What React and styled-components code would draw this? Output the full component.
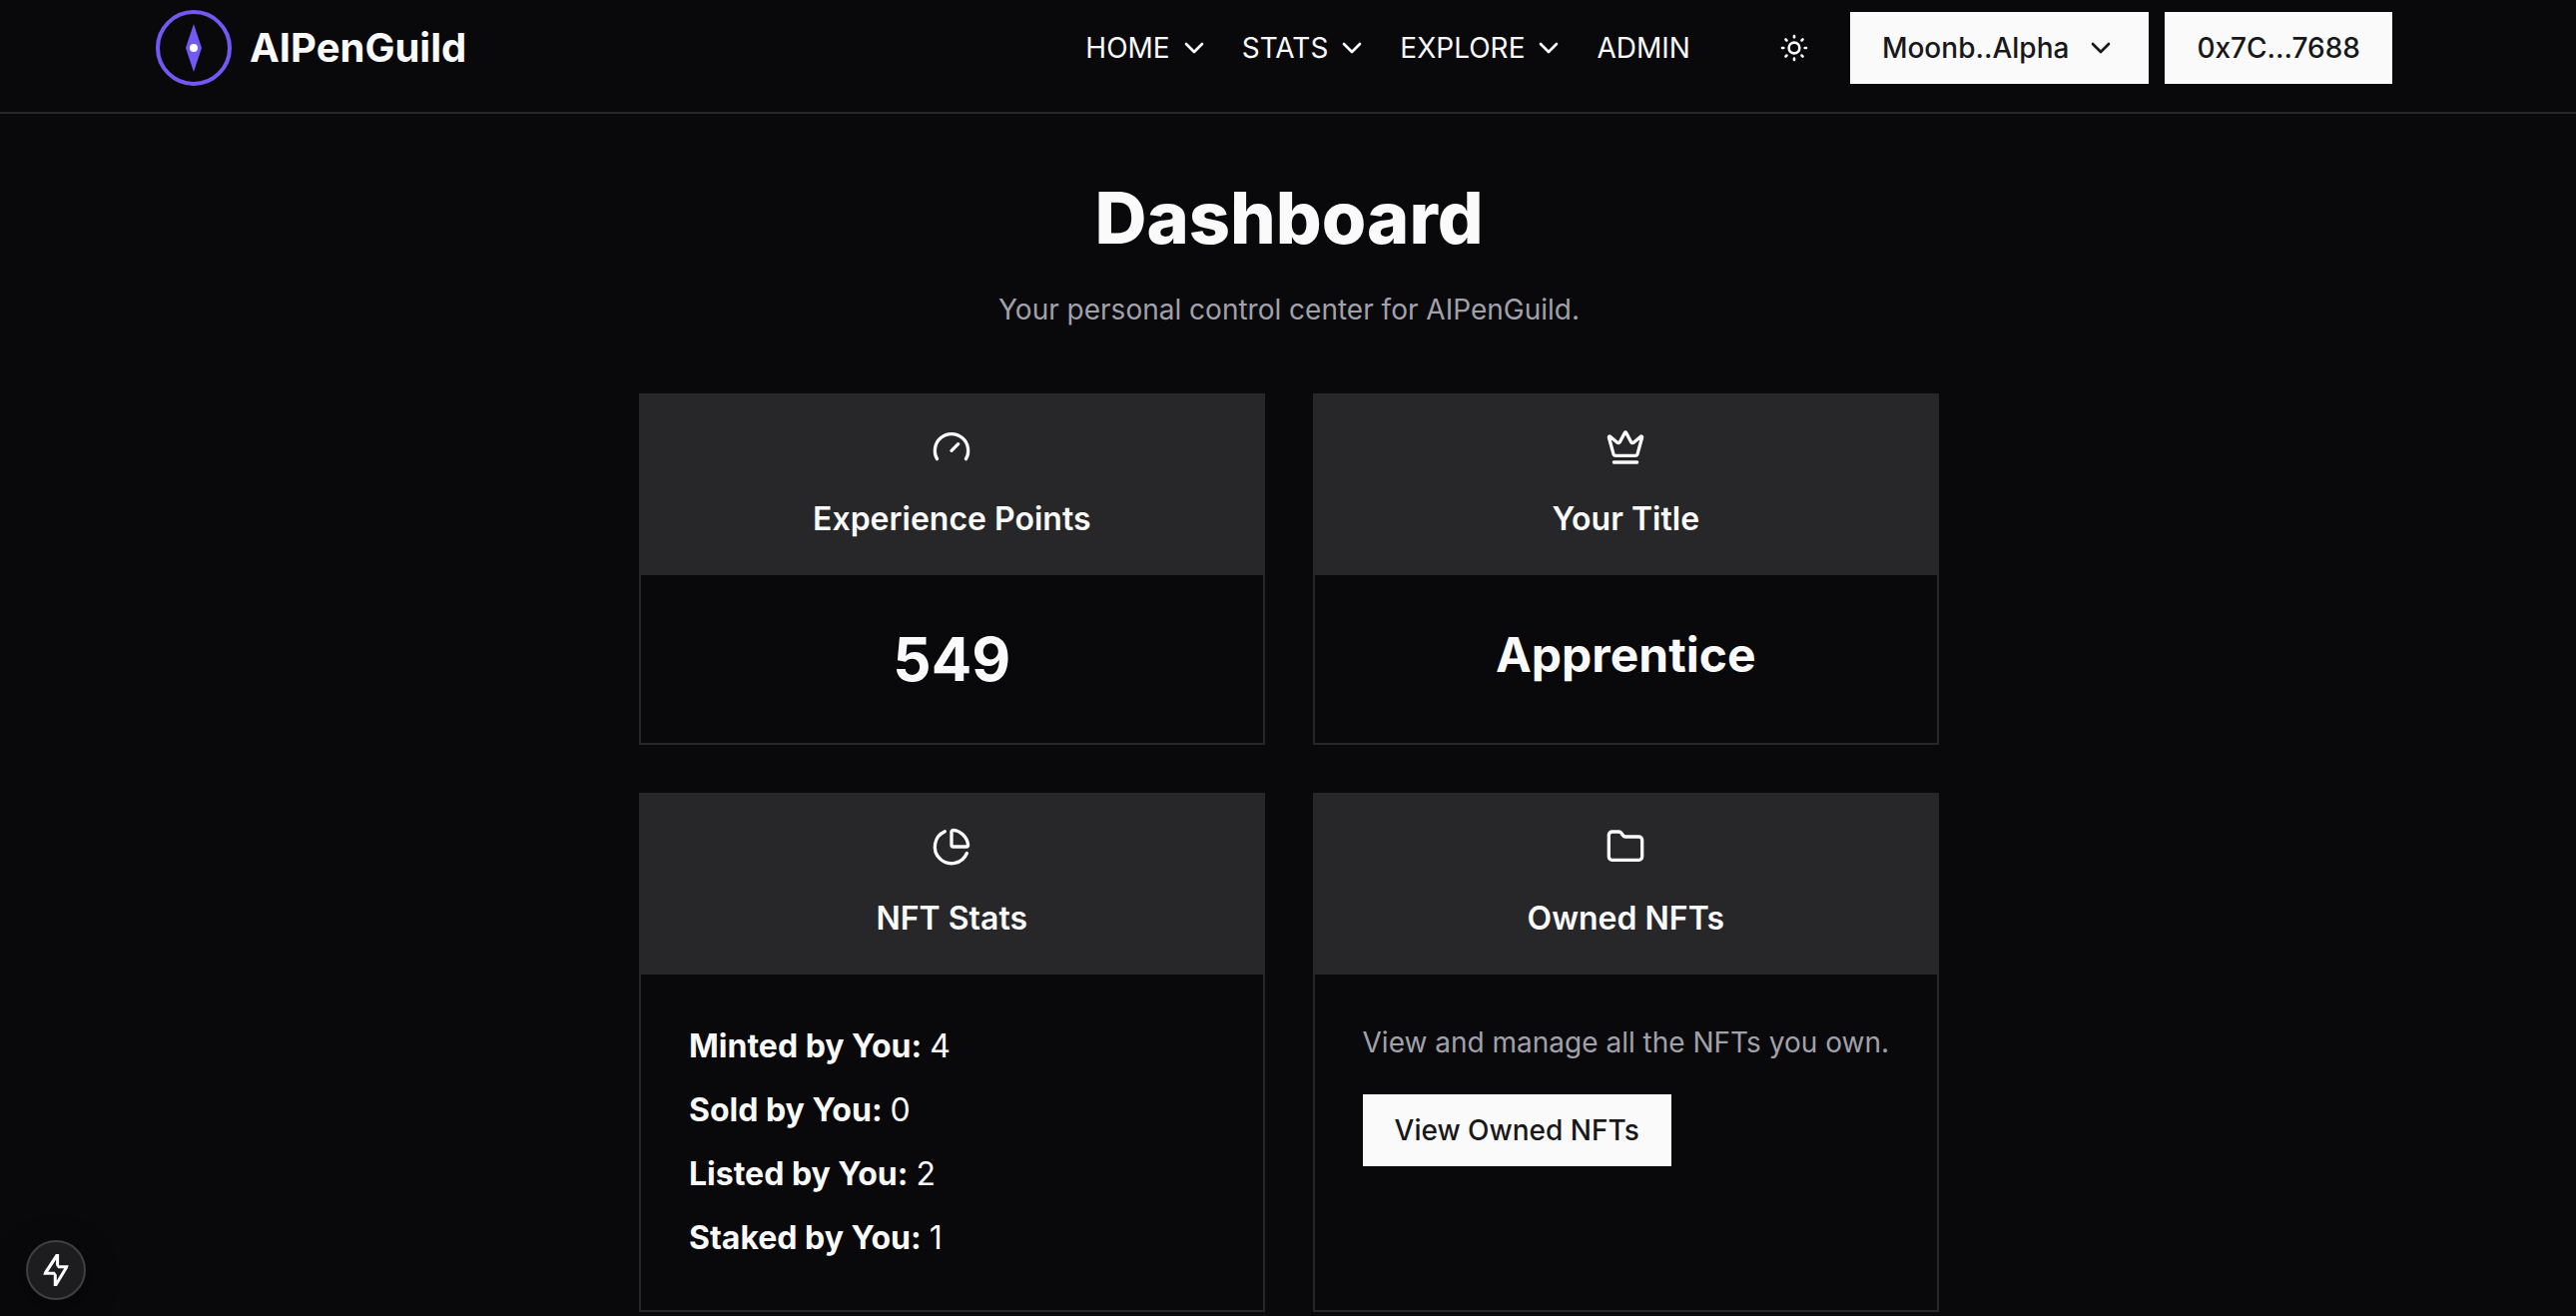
import React from "react";
import styled, { createGlobalStyle } from "styled-components";
import { ChevronDown, Crown, Folder, Gauge, ChartPie, SunMedium } from "lucide-react";

const color = {
  bg: "#09090b",
  fg: "#fafafa",
  muted: "#a1a1aa",
  surface: "#27272a",
  ink: "#18181b",
  accent: "#7458f5",
};

const GlobalStyle = createGlobalStyle`
  *, *::before, *::after { box-sizing: border-box; }
  body {
    margin: 0;
    background: ${color.bg};
    color: ${color.fg};
    font-family: Inter, "Liberation Sans", sans-serif;
    font-size: 28px;
    line-height: 40px;
    -webkit-font-smoothing: antialiased;
  }
  h1, h2, p, dl, dd { margin: 0; padding: 0; }
  button { font: inherit; color: inherit; border: 0; cursor: pointer; }
  svg { display: block; flex: none; }
`;

const Page = styled.div`
  min-height: 100vh;
`;

const Header = styled.header`
  border-bottom: 2px solid ${color.surface};
  padding: 0 184px 16px 154px;
`;

const HeaderInner = styled.div`
  height: 96px;
  display: flex;
  align-items: center;
  justify-content: space-between;
`;

const Brand = styled.a`
  display: flex;
  align-items: center;
  gap: 16px;
  color: inherit;
  text-decoration: none;
  font-size: 40px;
  font-weight: 700;
`;

const HeaderEnd = styled.div`
  display: flex;
  align-items: center;
  gap: 64px;
`;

const Nav = styled.nav`
  display: flex;
  align-items: center;
  gap: 32px;
`;

const NavButton = styled.button`
  display: flex;
  align-items: center;
  gap: 8px;
  padding: 0;
  background: none;
`;

const NavLink = styled.a`
  color: inherit;
  text-decoration: none;
`;

const Actions = styled.div`
  display: flex;
  align-items: center;
  gap: 16px;
`;

const IconButton = styled.button`
  display: grid;
  place-items: center;
  width: 80px;
  height: 72px;
  padding: 0;
  background: none;
`;

const Button = styled.button`
  display: inline-flex;
  align-items: center;
  gap: 16px;
  height: 72px;
  padding: 0 32px;
  background: ${color.fg};
  color: ${color.ink};
  font-weight: 500;
`;

const Main = styled.main`
  max-width: 1304px;
  margin: 0 auto;
  padding: 64px 0 0 2px;
`;

const Title = styled.h1`
  text-align: center;
  font-size: 72px;
  line-height: 80px;
  font-weight: 800;
`;

const Subtitle = styled.p`
  margin-top: 32px;
  text-align: center;
  color: ${color.muted};
`;

const Grid = styled.div`
  margin-top: 64px;
  display: grid;
  grid-template-columns: 1fr 1fr;
  gap: 48px;
`;

const CardBox = styled.section`
  border: 2px solid ${color.surface};
`;

const CardHead = styled.div`
  display: flex;
  flex-direction: column;
  align-items: center;
  gap: 28px;
  padding: 32px;
  background: ${color.surface};
`;

const CardTitle = styled.h2`
  font-size: 32px;
  line-height: 48px;
  font-weight: 600;
`;

const CardBody = styled.div`
  padding: 48px;
`;

const Figure = styled.p`
  text-align: center;
  font-weight: 700;
  font-size: ${(p) => (p.$large ? "60px" : "48px")};
  line-height: ${(p) => (p.$large ? "72px" : "64px")};
`;

const StatList = styled.dl`
  display: flex;
  flex-direction: column;
  gap: 16px;
  font-size: 32px;
  line-height: 48px;
`;

const Stat = styled.div`
  display: flex;
  gap: 8px;

  dt { font-weight: 700; }
`;

const Note = styled.p`
  margin-bottom: 32px;
  color: ${color.muted};
  white-space: nowrap;
`;

const DevBadge = styled.button`
  position: fixed;
  left: 26px;
  bottom: 16px;
  display: grid;
  place-items: center;
  width: 60px;
  height: 60px;
  padding: 0;
  border: 2px solid #404043;
  border-radius: 50%;
  background: #1d1d1f;
  box-shadow: 0 8px 32px rgba(0, 0, 0, 0.4);
`;

function Logo() {
  return (
    <svg width="80" height="80" viewBox="0 0 80 80" aria-hidden="true">
      <circle cx="40" cy="40" r="36" fill="none" stroke={color.accent} strokeWidth="4" />
      <path d="M40 16L48 40L40 64L32 40Z" fill={color.accent} />
      <circle cx="40" cy="40" r="4" fill="#fff" />
    </svg>
  );
}

function BoltIcon() {
  return (
    <svg width="32" height="32" viewBox="0 0 16 16" aria-hidden="true">
      <path
        fill="#fff"
        fillRule="evenodd"
        clipRule="evenodd"
        d="M9.55 0H7.95L2.15 8.9L1.65 10.4H6.9V16H8.5L13.85 7.1L14.35 5.6H9.55V0ZM8.05 2.8V5.65L9.1 7.1H12.1L8.4 13.2V10.35L7.35 8.9H4.1L8.05 2.8Z"
      />
    </svg>
  );
}

function Card({ icon: Icon, title, children }) {
  return (
    <CardBox>
      <CardHead>
        <Icon size={40} aria-hidden="true" />
        <CardTitle>{title}</CardTitle>
      </CardHead>
      <CardBody>{children}</CardBody>
    </CardBox>
  );
}

const menus = ["HOME", "STATS", "EXPLORE"];

const stats = [
  ["Minted by You:", 4],
  ["Sold by You:", 0],
  ["Listed by You:", 2],
  ["Staked by You:", 1],
];

export default function App() {
  return (
    <Page>
      <GlobalStyle />
      <Header>
        <HeaderInner>
          <Brand href="#">
            <Logo />
            AIPenGuild
          </Brand>
          <HeaderEnd>
            <Nav>
              {menus.map((name) => (
                <NavButton key={name} type="button">
                  {name}
                  <ChevronDown size={32} aria-hidden="true" />
                </NavButton>
              ))}
              <NavLink href="#">ADMIN</NavLink>
            </Nav>
            <Actions>
              <IconButton type="button" aria-label="Toggle theme">
                <SunMedium size={32} aria-hidden="true" />
              </IconButton>
              <Button type="button">
                Moonb..Alpha
                <ChevronDown size={32} aria-hidden="true" />
              </Button>
              <Button type="button">0x7C...7688</Button>
            </Actions>
          </HeaderEnd>
        </HeaderInner>
      </Header>

      <Main>
        <Title>Dashboard</Title>
        <Subtitle>Your personal control center for AIPenGuild.</Subtitle>
        <Grid>
          <Card icon={Gauge} title="Experience Points">
            <Figure $large>549</Figure>
          </Card>
          <Card icon={Crown} title="Your Title">
            <Figure>Apprentice</Figure>
          </Card>
          <Card icon={ChartPie} title="NFT Stats">
            <StatList>
              {stats.map(([label, value]) => (
                <Stat key={label}>
                  <dt>{label}</dt>
                  <dd>{value}</dd>
                </Stat>
              ))}
            </StatList>
          </Card>
          <Card icon={Folder} title="Owned NFTs">
            <Note>View and manage all the NFTs you own.</Note>
            <Button type="button">View Owned NFTs</Button>
          </Card>
        </Grid>
      </Main>

      <DevBadge type="button" aria-label="Open developer tools">
        <BoltIcon />
      </DevBadge>
    </Page>
  );
}
